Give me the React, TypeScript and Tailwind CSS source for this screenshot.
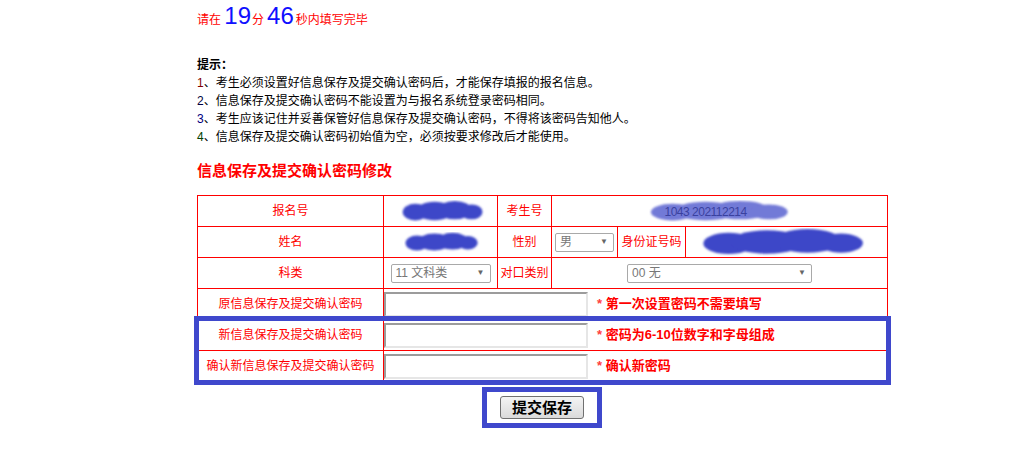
import React from "react";

const RED = "text-[#ff0000]";

const Blob = ({ w, h, id, light }: { w: number; h: number; id: string; light?: boolean }) => (
  <svg width={w} height={h} viewBox={`0 0 ${w} ${h}`} className="block">
    <defs>
      <filter id={id} x="-20%" y="-40%" width="140%" height="180%">
        <feGaussianBlur stdDeviation="1.3" />
      </filter>
    </defs>
    <g filter={`url(#${id})`} fill="#3d46c8" opacity={light ? 0.72 : 1}>
      <ellipse cx={w * 0.17} cy={h * 0.55} rx={w * 0.15} ry={h * 0.38} />
      <ellipse cx={w * 0.4} cy={h * 0.5} rx={w * 0.22} ry={h * 0.42} />
      <ellipse cx={w * 0.64} cy={h * 0.46} rx={w * 0.2} ry={h * 0.42} />
      <ellipse cx={w * 0.84} cy={h * 0.54} rx={w * 0.13} ry={h * 0.34} />
    </g>
  </svg>
);

const FakeSelect = ({ w, text }: { w: number; text: string }) => (
  <div
    className="mx-auto flex h-[19px] items-center justify-between rounded-[2px] border border-[#a9a9a9] bg-white pl-[4px] pr-[5px] text-[12px] text-[#777]"
    style={{ width: w }}
  >
    <span>{text}</span>
    <span className="text-[8px] text-[#666]">▼</span>
  </div>
);

const Input = () => (
  <div className="h-[25px] w-[204px] border-2 border-t-[#9c9c9c] border-l-[#9c9c9c] border-r-[#e6e6e6] border-b-[#e6e6e6] bg-white" />
);

const cell = "border border-[#ff0000] p-0 text-center align-middle text-[12px] h-[31px]";

const PwRow = ({ label, hint }: { label: string; hint: React.ReactNode }) => (
  <tr>
    <td className={`${cell} ${RED}`}>{label}</td>
    <td colSpan={5} className={`${cell} text-left`}>
      <div className="flex items-center">
        <Input />
        <span className={`ml-[9px] text-[13px] font-bold ${RED}`}>
          <span className="text-[#ff4040]">*</span>&nbsp;{hint}
        </span>
      </div>
    </td>
  </tr>
);

export default function App() {
  return (
    <div className="min-h-[451px] w-[1032px] bg-white pl-[197px] font-['Liberation_Sans','Noto_Sans_CJK_SC',sans-serif] text-black">
      <div className={`flex items-baseline pt-[4px] text-[12px] leading-[24px] ${RED}`}>
        <span>请在&nbsp;</span>
        <span className="text-[24px] text-[#1010ff]">19</span>
        <span className="mx-[1px]">分</span>
        <span className="ml-[2px] text-[24px] text-[#1010ff]">46</span>
        <span className="ml-[2px]">秒内填写完毕</span>
      </div>

      <div className="mt-[24px] text-[12px] leading-[18px]">
        <div className="font-bold">提示：</div>
        <div><span className="text-[#800000]">1</span>、考生必须设置好信息保存及提交确认密码后，才能保存填报的报名信息。</div>
        <div><span className="text-[#000040]">2</span>、信息保存及提交确认密码不能设置为与报名系统登录密码相同。</div>
        <div><span className="text-[#000080]">3</span>、考生应该记住并妥善保管好信息保存及提交确认密码，不得将该密码告知他人。</div>
        <div><span className="text-[#004000]">4</span>、信息保存及提交确认密码初始值为空，必须按要求修改后才能使用。</div>
      </div>

      <div className={`mt-[15px] text-[15px] font-bold leading-[20px] ${RED}`}>信息保存及提交确认密码修改</div>

      <div className="relative mt-[14px] w-[690px]">
        <table className="w-[690px] table-fixed border-collapse">
          <colgroup>
            <col className="w-[186px]" />
            <col className="w-[114px]" />
            <col className="w-[54px]" />
            <col className="w-[66px]" />
            <col className="w-[68px]" />
            <col className="w-[202px]" />
          </colgroup>
          <tbody>
            <tr>
              <td className={`${cell} ${RED}`}>报名号</td>
              <td className={cell}>
                <div className="flex justify-center pl-[4px]"><Blob w={84} h={22} id="b1" /></div>
              </td>
              <td className={`${cell} ${RED}`}>考生号</td>
              <td colSpan={3} className={cell}>
                <div className="relative mx-auto h-[22px] w-[144px]">
                  <span className="absolute left-[17px] top-[3px] text-[12px] tracking-[-0.5px] text-[#333]">1043 202112214</span>
                  <div className="absolute inset-0"><Blob w={144} h={22} id="b3" light /></div>
                </div>
              </td>
            </tr>
            <tr>
              <td className={`${cell} ${RED}`}>姓名</td>
              <td className={cell}>
                <div className="flex justify-center pl-[2px]"><Blob w={76} h={20} id="b2" /></div>
              </td>
              <td className={`${cell} ${RED}`}>性别</td>
              <td className={cell}><FakeSelect w={59} text="男" /></td>
              <td className={`${cell} ${RED}`}>身份证号码</td>
              <td className={cell}>
                <div className="flex justify-center pr-[6px]"><Blob w={168} h={28} id="b4" /></div>
              </td>
            </tr>
            <tr>
              <td className={`${cell} ${RED}`}>科类</td>
              <td className={cell}><FakeSelect w={100} text="11 文科类" /></td>
              <td className={`${cell} ${RED}`}>对口类别</td>
              <td colSpan={3} className={cell}><FakeSelect w={185} text="00 无" /></td>
            </tr>
            <PwRow label="原信息保存及提交确认密码" hint="第一次设置密码不需要填写" />
            <PwRow label="新信息保存及提交确认密码" hint="密码为6-10位数字和字母组成" />
            <PwRow label="确认新信息保存及提交确认密码" hint="确认新密码" />
          </tbody>
        </table>
        <div className="pointer-events-none absolute left-[-3px] top-[121px] h-[69px] w-[697px] border-[5px] border-[#3f48cc]" />
      </div>

      <div className="mt-[5px] flex w-[690px] justify-center">
        <div className="flex h-[41px] w-[120px] items-center justify-center border-[5px] border-[#3f48cc]">
          <button className="h-[23px] w-[84px] rounded-[3px] border border-[#707070] bg-gradient-to-b from-[#f4f4f4] to-[#dadada] text-[15px] font-bold leading-none text-black">
            提交保存
          </button>
        </div>
      </div>
    </div>
  );
}
